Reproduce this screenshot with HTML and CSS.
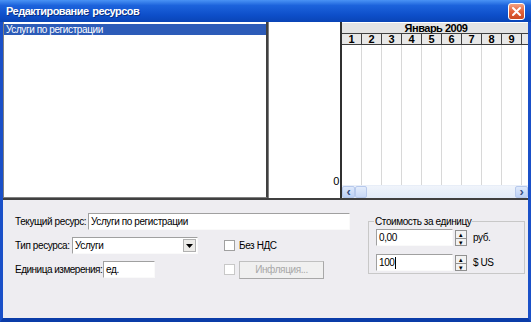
FILE: index.html
```html
<!DOCTYPE html>
<html>
<head>
<meta charset="utf-8">
<link rel="stylesheet" href="styles.css">
</head>
<body>

<div class="window">
  <div class="titlebar">
    <span class="title">Редактирование ресурсов</span>
    <span class="close_btn">
      <svg width="15" height="15" viewBox="0 0 15 15"><path d="M4 4 L11 11 M11 4 L4 11" stroke="#fff" stroke-width="2" stroke-linecap="round"/></svg>
    </span>
  </div>

  <div class="top_area">
    <div class="res_list">
      <div class="res_item selected">Услуги по регистрации</div>
    </div>
    <div class="mid_panel"><span class="zero">0</span></div>
    <div class="calendar">
      <div class="cal_month">Январь 2009</div>
      <div class="cal_days">
        <span>1</span><span>2</span><span>3</span><span>4</span><span>5</span>
        <span>6</span><span>7</span><span>8</span><span>9</span><span>1</span>
      </div>
      <div class="cal_grid">
        <span></span><span></span><span></span><span></span><span></span>
        <span></span><span></span><span></span><span></span><span></span>
      </div>
      <div class="hscroll">
        <span class="sb_btn">&#8249;</span>
        <span class="sb_thumb"></span>
        <span class="sb_track"></span>
        <span class="sb_btn">&#8250;</span>
      </div>
    </div>
  </div>

  <div class="bottom_area">
    <div class="form_col">
      <div class="form_row">
        <label class="lbl lbl_cur">Текущий ресурс:</label>
        <div class="edit wide">Услуги по регистрации</div>
      </div>
      <div class="form_row">
        <div class="field">
          <label class="lbl lbl_type">Тип ресурса:</label>
          <div class="edit combo">Услуги<span class="combo_btn"><svg width="7" height="4" viewBox="0 0 7 4"><path d="M0 0 H7 L3.5 4 Z" fill="#000"/></svg></span></div>
        </div>
        <span class="check"></span>
        <span class="check_lbl">Без НДС</span>
      </div>
      <div class="form_row">
        <div class="field">
          <label class="lbl lbl_unit">Единица измерения:</label>
          <div class="edit unit">ед.</div>
        </div>
        <span class="check disabled"></span>
        <span class="btn disabled">Инфляция...</span>
      </div>
    </div>

    <fieldset class="group">
      <legend>Стоимость за единицу</legend>
      <div class="spin_row">
        <div class="edit spin_edit">0,00</div>
        <span class="spin"><span>&#9652;</span><span>&#9662;</span></span>
        <span class="cur">руб.</span>
      </div>
      <div class="spin_row">
        <div class="edit spin_edit">100<span class="caret"></span></div>
        <span class="spin"><span>&#9652;</span><span>&#9662;</span></span>
        <span class="cur">$ US</span>
      </div>
    </fieldset>
  </div>
</div>

</body>
</html>
```

FILE: styles.css
```css
body {
  margin: 0;
  font-family: "Liberation Sans", Arial, sans-serif;
  font-size: 10px;
  letter-spacing: -0.4px;
  color: #000;
  background: #fff;
}

.window {
  width: 531px;
  height: 322px;
  box-sizing: border-box;
  background: #0d4bc6;
  border-left: 3px solid #1a50c8;
  border-right: 3px solid #1a50c8;
  border-bottom: 4px solid #0a3ca8;
  display: flex;
  flex-direction: column;
}

.titlebar {
  height: 22px;
  margin: 0 -3px;
  padding: 0 5px 0 6px;
  display: flex;
  align-items: center;
  justify-content: space-between;
  background: linear-gradient(#4a93f5, #1c63dc 25%, #0d4ec9 70%, #0a44b6);
}

.title {
  color: #fff;
  font-weight: bold;
  font-size: 11px;
  letter-spacing: -0.5px;
  word-spacing: 1px;
  text-shadow: 1px 1px 0 #0a2f80;
}

.close_btn {
  width: 15px;
  height: 15px;
  margin-right: 1px;
  border: 1px solid #fff;
  border-radius: 3px;
  background: linear-gradient(#f2a283, #e3623a 50%, #cc4a22);
  display: flex;
}

.top_area {
  height: 178px;
  display: flex;
  background: #fff;
  border-bottom: 2px solid #404040;
  box-sizing: border-box;
}

.res_list {
  width: 265px;
  border: 1px solid #808080;
  border-right: 2px solid #404040;
  border-top: none;
  box-sizing: border-box;
  padding: 2px 0 0 0;
}

.res_item {
  height: 11px;
  line-height: 11px;
  padding-left: 2px;
}

.res_item.selected {
  background: #2c5bb8;
  color: #fff;
}

.mid_panel {
  width: 74px;
  border-left: 1px solid #808080;
  border-right: 2px solid #303030;
  box-sizing: border-box;
  display: flex;
  align-items: flex-end;
  justify-content: flex-end;
  padding: 0 1px 11px 0;
}

.zero {
  line-height: 11px;
  font-size: 11px;
}

.calendar {
  flex: 1;
  display: flex;
  flex-direction: column;
  overflow: hidden;
  padding-top: 1px;
}

.cal_month {
  height: 10px;
  line-height: 11px;
  background: #e4e4e4;
  text-align: center;
  font-weight: bold;
  font-size: 11px;
  letter-spacing: -0.5px;
  padding-left: 2px;
}

.cal_days,
.cal_grid {
  display: flex;
  width: 210px;
}

.cal_days {
  height: 10px;
  background: #e8e8e8;
  border-top: 1px solid #404040;
  border-bottom: 1px solid #404040;
}

.cal_days span {
  width: 19px;
  flex: none;
  border-right: 1px solid #404040;
  text-align: center;
  font-weight: bold;
  font-size: 11px;
  letter-spacing: 0;
  line-height: 10px;
}

.cal_grid {
  flex: 1;
}

.cal_grid span {
  width: 19px;
  flex: none;
  border-right: 1px solid #d8d8d8;
}

.hscroll {
  height: 12px;
  display: flex;
  background: linear-gradient(#f0f4fb, #e2ebf8);
  border-top: 1px solid #e8eef8;
}

.sb_btn {
  width: 13px;
  height: 12px;
  flex: none;
  box-sizing: border-box;
  border: 1px solid #b7c9ec;
  border-radius: 2px;
  background: linear-gradient(#dfe9fb, #bcd0f5);
  color: #3a4f80;
  font-weight: bold;
  font-size: 13px;
  line-height: 9px;
  text-align: center;
}

.sb_thumb {
  width: 12px;
  flex: none;
  box-sizing: border-box;
  border: 1px solid #b7c9ec;
  border-radius: 2px;
  background: linear-gradient(#e3ecfb, #c8d8f6);
}

.sb_track {
  flex: 1;
}

.bottom_area {
  flex: 1;
  background: #eeedf1;
  display: flex;
  padding: 13px 0 0 12px;
}

.form_col {
  width: 338px;
  display: flex;
  flex-direction: column;
  gap: 7px;
}

.form_row {
  display: flex;
  align-items: center;
  height: 17px;
}

.field {
  width: 209px;
  display: flex;
  align-items: center;
}

.lbl {
  white-space: nowrap;
  flex: none;
}

.lbl_cur {
  width: 73px;
}

.lbl_type {
  width: 57px;
}

.lbl_unit {
  width: 88px;
  letter-spacing: -0.5px;
}

.edit {
  height: 17px;
  box-sizing: border-box;
  background: #fff;
  border-top: 1px solid #a0a0a0;
  border-left: 1px solid #a0a0a0;
  border-bottom: 1px solid #fafafa;
  border-right: 1px solid #fafafa;
  padding: 0 2px;
  line-height: 15px;
  white-space: nowrap;
}

.wide {
  width: 262px;
}

.combo {
  width: 126px;
  display: flex;
  justify-content: space-between;
  padding-right: 1px;
}

.combo_btn {
  width: 13px;
  height: 13px;
  margin-top: 1px;
  box-sizing: border-box;
  border: 1px solid #b0b0b0;
  background: #ecebe8;
  display: flex;
  align-items: center;
  justify-content: center;
}

.unit {
  width: 52px;
}

.check {
  width: 11px;
  height: 11px;
  box-sizing: border-box;
  border: 1px solid #a0a0a0;
  background: #fff;
  margin-right: 4px;
}

.check.disabled {
  border-color: #c8c8c8;
}

.btn {
  width: 85px;
  height: 18px;
  box-sizing: border-box;
  border: 1px solid #c0c0c0;
  border-right-color: #a8a8a8;
  border-bottom-color: #a8a8a8;
  background: #f0f0f0;
  text-align: center;
  line-height: 16px;
}

.btn.disabled {
  color: #a8a8a8;
}

.group {
  margin: 4px 0 0 15px;
  width: 157px;
  height: 57px;
  box-sizing: border-box;
  border: 1px solid #c8c8c8;
  padding: 3px 0 0 7px;
  display: flex;
  flex-direction: column;
  gap: 8px;
}

.group legend {
  padding: 0 1px;
  margin-left: -2px;
  line-height: 9px;
}

.spin_row {
  display: flex;
  align-items: center;
  height: 17px;
}

.spin_edit {
  width: 77px;
}

.caret {
  display: inline-block;
  width: 1px;
  height: 12px;
  background: #000;
  vertical-align: middle;
}

.spin {
  width: 12px;
  height: 16px;
  margin-left: 2px;
  display: flex;
  flex-direction: column;
  box-sizing: border-box;
  border: 1px solid #909090;
  background: #f2f2f2;
}

.spin span {
  flex: 1;
  font-size: 7px;
  line-height: 7px;
  letter-spacing: 0;
  text-align: center;
}

.spin span + span {
  border-top: 1px solid #909090;
}

.cur {
  margin-left: 6px;
}
```
